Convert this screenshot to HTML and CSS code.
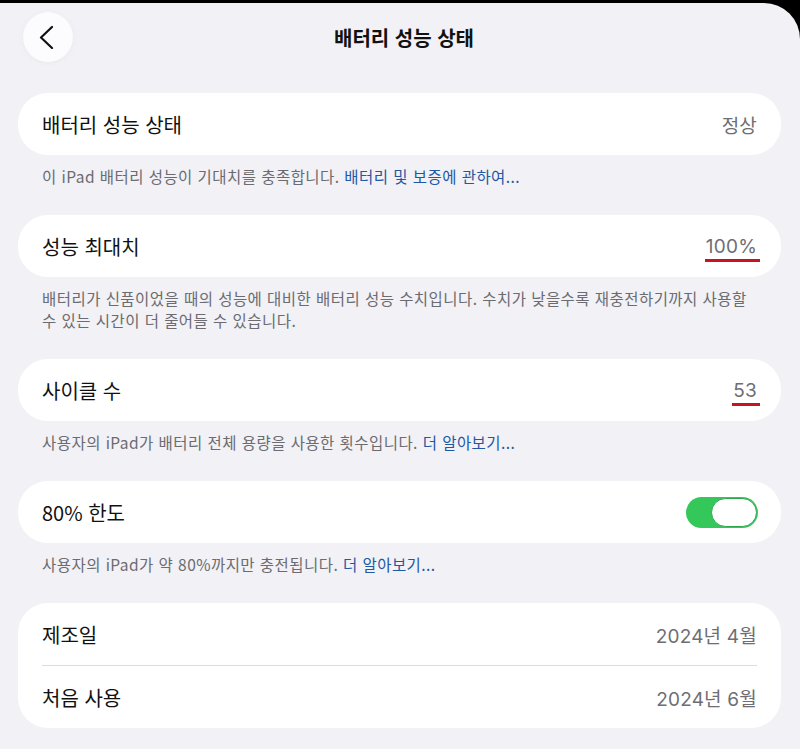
FILE: index.html
```html
<!DOCTYPE html>
<html lang="ko">
<head>
<meta charset="utf-8">
<title>배터리 성능 상태</title>
<link rel="stylesheet" href="styles.css">
</head>
<body>
<div class="screen">
  <header class="nav">
    <button class="back" aria-label="뒤로">
      <svg width="16" height="24" viewBox="0 0 16 24"><path d="M14 2 L3 12.5 L14 23" fill="none" stroke="#111" stroke-width="2.2" stroke-linecap="round" stroke-linejoin="round"/></svg>
    </button>
    <h1 class="title">배터리 성능 상태</h1>
  </header>

  <main class="content">
    <section class="group">
      <div class="card">
        <div class="row"><span class="label">배터리 성능 상태</span><span class="value">정상</span></div>
      </div>
      <p class="foot">이 iPad 배터리 성능이 기대치를 충족합니다. <a class="link">배터리 및 보증에 관하여...</a></p>
    </section>

    <section class="group">
      <div class="card">
        <div class="row"><span class="label">성능 최대치</span><span class="value marked">100%</span></div>
      </div>
      <p class="foot">배터리가 신품이었을 때의 성능에 대비한 배터리 성능 수치입니다. 수치가 낮을수록 재충전하기까지 사용할 수 있는 시간이 더 줄어들 수 있습니다.</p>
    </section>

    <section class="group">
      <div class="card">
        <div class="row"><span class="label">사이클 수</span><span class="value marked">53</span></div>
      </div>
      <p class="foot">사용자의 iPad가 배터리 전체 용량을 사용한 횟수입니다. <a class="link">더 알아보기...</a></p>
    </section>

    <section class="group">
      <div class="card">
        <div class="row"><span class="label">80% 한도</span><span class="toggle"><span class="knob"></span></span></div>
      </div>
      <p class="foot">사용자의 iPad가 약 80%까지만 충전됩니다. <a class="link">더 알아보기...</a></p>
    </section>

    <section class="group">
      <div class="card">
        <div class="row"><span class="label">제조일</span><span class="value">2024년 4월</span></div>
        <div class="sep"></div>
        <div class="row"><span class="label">처음 사용</span><span class="value">2024년 6월</span></div>
      </div>
    </section>
  </main>
</div>
</body>
</html>
```

FILE: styles.css
```css
* { box-sizing: border-box; }
html, body { margin: 0; padding: 0; }
body {
  background: #000;
  width: 800px;
  height: 749px;
  overflow: hidden;
  font-family: "Inter", "Noto Sans CJK KR", sans-serif;
}
.screen {
  margin-top: 3px;
  height: 746px;
  background: #f1f1f6;
  border-top-right-radius: 36px;
}
.nav {
  height: 90px;
  display: flex;
  align-items: flex-start;
  position: relative;
}
.back {
  margin: 9px 0 0 23px;
  width: 50px;
  height: 50px;
  border-radius: 50%;
  border: none;
  background: #fcfcfe;
  box-shadow: 0 1px 6px rgba(0,0,0,0.04);
  display: flex;
  align-items: center;
  justify-content: center;
  padding: 0 4px 0 0;
}
.title {
  position: absolute;
  left: 8px;
  right: 0;
  top: 21px;
  margin: 0;
  text-align: center;
  font-family: "Noto Sans CJK KR", sans-serif;
  font-size: 20px;
  font-weight: 700;
  letter-spacing: 0;
  color: #111;
  line-height: 28px;
}
.content {
  padding: 0 19px 0 18px;
}
.card {
  background: #fff;
  border-radius: 30px;
  padding: 0 24px;
}
.row {
  height: 62px;
  display: flex;
  align-items: center;
  justify-content: space-between;
}
.label {
  font-family: "Noto Sans CJK KR", sans-serif;
  font-size: 20px;
  letter-spacing: 0;
  color: #111;
}
.value {
  font-family: "Inter", "Noto Sans CJK KR", sans-serif;
  font-size: 19px;
  color: #6e6e73;
  letter-spacing: 0.2px;
}
.marked {
  position: relative;
}
.marked::after {
  content: "";
  position: absolute;
  left: -1px;
  right: -3px;
  bottom: -4px;
  height: 3px;
  background: #c8141e;
}
.sep {
  height: 1px;
  background: #dcdce0;
}
.foot {
  margin: 0;
  padding: 10px 24px 28px 24px;
  font-family: "Noto Sans CJK KR", sans-serif;
  font-size: 15.5px;
  letter-spacing: 0.45px;
  line-height: 22px;
  color: #6b6b70;
}
.link {
  color: #1f58a4;
}
.toggle {
  width: 72px;
  height: 31px;
  border-radius: 16px;
  background: #34c759;
  display: flex;
  align-items: center;
  justify-content: flex-end;
  padding: 1px;
  margin-right: -1px;
}
.knob {
  width: 46px;
  height: 29px;
  border-radius: 15px;
  background: #fff;
  border: 1px solid #2aa84a;
}
```
